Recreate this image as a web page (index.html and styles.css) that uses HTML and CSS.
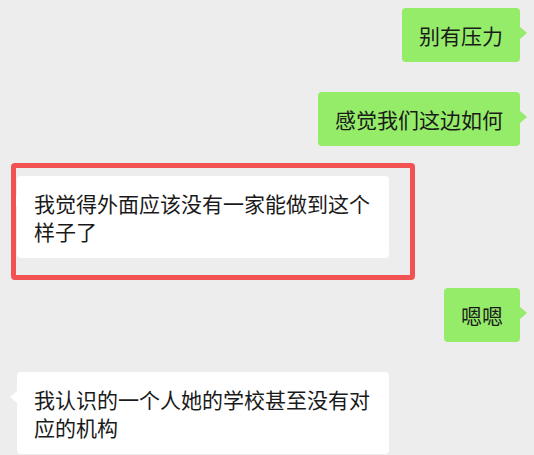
FILE: index.html
```html
<!DOCTYPE html>
<html lang="zh-CN">
<head>
  <meta charset="UTF-8">
  <title>聊天记录</title>
  <link rel="stylesheet" href="styles.css">
</head>
<body>

<div class="chat">
  <div class="row mine">
    <div class="bubble">别有压力</div>
  </div>
  <div class="row mine">
    <div class="bubble">感觉我们这边如何</div>
  </div>
  <div class="row theirs">
    <div class="bubble marked">我觉得外面应该没有一家能做到这个样子了</div>
  </div>
  <div class="row mine">
    <div class="bubble">嗯嗯</div>
  </div>
  <div class="row theirs">
    <div class="bubble">我认识的一个人她的学校甚至没有对应的机构</div>
  </div>
</div>

</body>
</html>
```

FILE: styles.css
```css
html, body {
  margin: 0;
  height: 100%;
  background-color: #ededed;
  overflow: hidden;
}

.chat {
  display: flex;
  flex-direction: column;
  gap: 30px;
  padding: 8px 14px 0 17px;
  font-family: "Noto Sans CJK SC", "Microsoft YaHei", sans-serif;
}

.row {
  display: flex;
}

.row.mine {
  justify-content: flex-end;
}

.row.theirs {
  justify-content: flex-start;
}

.bubble {
  position: relative;
  box-sizing: border-box;
  max-width: 372px;
  padding: 13px 17px;
  border-radius: 4px;
  font-size: 21px;
  line-height: 28px;
  color: #1a1a1a;
  word-break: break-all;
}

.mine .bubble {
  background-color: #95ec69;
}

.theirs .bubble {
  background-color: #ffffff;
}

/* little tail pointing at the sender */
.bubble::before {
  content: "";
  position: absolute;
  top: 19px;
  border-top: 6px solid transparent;
  border-bottom: 6px solid transparent;
}

.mine .bubble::before {
  right: -7px;
  border-left: 7px solid #95ec69;
}

.theirs .bubble::before {
  left: -7px;
  border-right: 7px solid #ffffff;
}

/* red highlight frame drawn over the message */
.bubble.marked::after {
  content: "";
  position: absolute;
  top: -13px;
  left: -6px;
  right: -26px;
  bottom: -22px;
  border: 5px solid #f25252;
  border-radius: 4px;
}
```
